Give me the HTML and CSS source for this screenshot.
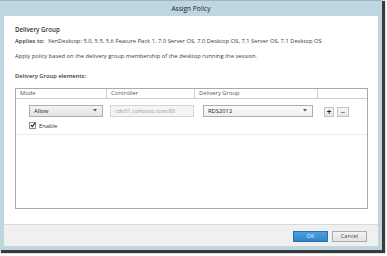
FILE: index.html
```html
<!DOCTYPE html>
<html>
<head>
<meta charset="utf-8">
<link rel="stylesheet" href="styles.css">
</head>
<body>
<div class="window">
  <div class="titlebar">Assign Policy</div>
  <div class="content">
    <div class="heading">Delivery Group</div>
    <div class="applies"><b>Applies to:</b> XenDesktop: 5.0, 5.5, 5.6 Feature Pack 1, 7.0 Server OS, 7.0 Desktop OS, 7.1 Server OS, 7.1 Desktop OS</div>
    <div class="desc">Apply policy based on the delivery group membership of the desktop running the session.</div>
    <div class="label">Delivery Group elements:</div>
    <div class="table">
      <div class="thead">
        <div class="th c1">Mode</div>
        <div class="th c2">Controller</div>
        <div class="th c3">Delivery Group</div>
        <div class="th c4"></div>
      </div>
      <div class="row">
        <div class="td c1">
          <div class="select sel-mode"><span>Allow</span><svg class="arrow" width="4" height="3" viewBox="0 0 4 3"><path d="M0 0H4L2 2.5Z" fill="#555"/></svg></div>
          <label class="check"><span class="box"><svg width="6" height="6" viewBox="0 0 6 6"><path d="M1 3L2.4 4.6L5 1" stroke="#222" stroke-width="1.2" fill="none"/></svg></span>Enable</label>
        </div>
        <div class="td c2">
          <div class="input">cdc01.contoso.com:80</div>
        </div>
        <div class="td c3">
          <div class="select sel-group"><span>RDS2012</span><svg class="arrow" width="4" height="3" viewBox="0 0 4 3"><path d="M0 0H4L2 2.5Z" fill="#555"/></svg></div>
        </div>
        <div class="td c4">
          <div class="iconbtn plus">+</div>
          <div class="iconbtn minus">−</div>
        </div>
      </div>
    </div>
  </div>
  <div class="footer">
    <div class="btn ok">OK</div>
    <div class="btn cancel">Cancel</div>
  </div>
</div>
</body>
</html>
```
FILE: styles.css
```css
html, body {
  margin: 0;
  padding: 0;
  background: #ffffff;
}
body {
  width: 387px;
  height: 256px;
  font-family: "Open Sans", "Noto Sans", sans-serif;
  font-size: 5.8px;
  color: #3a3a3a;
}
.window {
  width: 382px;
  height: 250px;
  box-sizing: border-box;
  background: #bed6e0;
  border-top: 1px solid #9fb6c0;
  box-shadow: 2px 2px 1px 1px #3a3a3a;
  display: flex;
  flex-direction: column;
}
.titlebar {
  height: 15px;
  line-height: 15px;
  text-align: center;
  font-size: 6.6px;
  color: #222;
}
.content {
  flex: 1;
  background: #ffffff;
  margin: 0 4px;
  padding: 10px 11px 0 11px;
  display: flex;
  flex-direction: column;
}
.heading {
  font-weight: 600;
  font-size: 6.2px;
  line-height: 8px;
  color: #333;
}
.applies {
  line-height: 8px;
  margin-top: 2.5px;
}
.applies b {
  font-weight: 600;
  margin-right: 2px;
}
.desc {
  line-height: 8px;
  margin-top: 7.5px;
}
.label {
  line-height: 8px;
  margin-top: 11.5px;
  font-weight: 600;
}
.table {
  margin-top: 8px;
  width: 353px;
  height: 121px;
  box-sizing: border-box;
  border: 1px solid #a9a9a9;
}
.thead, .row {
  display: grid;
  grid-template-columns: 91px 88px 123px 1fr;
}
.thead {
  height: 9px;
  border-bottom: 1px solid #cfcfcf;
}
.th {
  line-height: 9px;
  padding-left: 4px;
  color: #555;
  border-right: 1px solid #cfcfcf;
}
.th.c4 {
  border-right: none;
}
.row {
  height: 35px;
  border-bottom: 1px solid #ececec;
}
.td {
  padding-top: 6px;
}
.td.c1 { padding-left: 13px; padding-right: 4px; }
.td.c2 { padding-left: 3px; padding-right: 1px; }
.td.c3 { padding-left: 8px; padding-right: 5px; }
.td.c4 { padding-left: 6px; display: flex; gap: 3px; align-items: flex-start; padding-top: 8px; }
.select {
  height: 12px;
  box-sizing: border-box;
  border: 1px solid #acacac;
  background: linear-gradient(#f3f3f3, #e4e4e4);
  display: flex;
  align-items: center;
  justify-content: space-between;
  padding: 0 5px 0 4px;
  color: #222;
}
.sel-group {
  background: linear-gradient(#fbfbfb, #efefef);
}
.arrow {
  display: block;
}
.input {
  height: 12px;
  box-sizing: border-box;
  border: 1px solid #d4d4d4;
  background: #f4f4f4;
  color: #9a9a9a;
  line-height: 10px;
  padding-left: 4px;
}
.check {
  display: flex;
  align-items: center;
  gap: 3px;
  margin-top: 5px;
  color: #333;
}
.box {
  width: 5px;
  height: 5px;
  border: 1px solid #8a8a8a;
  background: #fff;
  position: relative;
}
.box svg {
  position: absolute;
  left: -0.5px;
  top: -1px;
}
.iconbtn {
  width: 10px;
  height: 10px;
  box-sizing: border-box;
  border: 1px solid #c2c2c2;
  background: linear-gradient(#f6f6f6, #e6e6e6);
  font-size: 8px;
  line-height: 8px;
  text-align: center;
  font-weight: 700;
}
.plus { color: #222; }
.minus { color: #777; width: 12px; }
.footer {
  height: 22px;
  box-sizing: border-box;
  margin: 0 4px 4px 4px;
  background: #f0f0f0;
  border-top: 1px solid #d9d9d9;
  display: flex;
  justify-content: flex-end;
  align-items: flex-start;
  gap: 4px;
  padding: 6px 11px 0 0;
}
.btn {
  width: 35px;
  height: 11px;
  box-sizing: border-box;
  text-align: center;
  line-height: 9px;
  font-size: 5.6px;
}
.ok {
  background: linear-gradient(#4c9ee0, #3385cc);
  border: 1px solid #2a6db0;
  color: #e8f2fb;
}
.cancel {
  background: linear-gradient(#f2f2f2, #e3e3e3);
  border: 1px solid #acacac;
  color: #444;
}
```
